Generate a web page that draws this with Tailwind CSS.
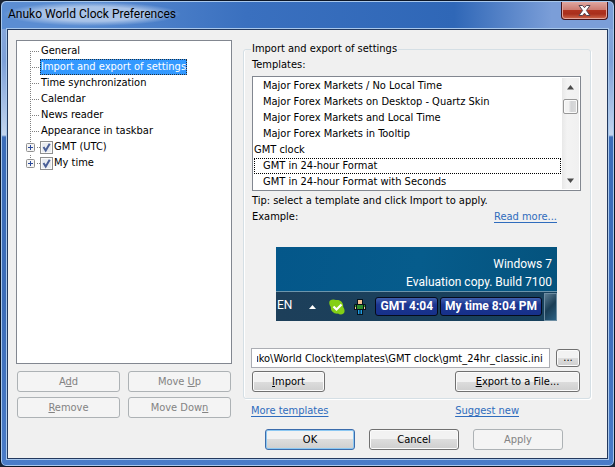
<!DOCTYPE html>
<html lang="en">
<head>
<meta charset="UTF-8">
<meta name="viewport" content="width=device-width, initial-scale=1.0">
<title>Anuko World Clock Preferences</title>
<script src="https://cdn.jsdelivr.net/npm/@tailwindcss/browser@4"></script>
</head>
<body class="bg-[#1b2433]">

<!-- shared tree parts -->
<svg class="hidden">
  <symbol id="branch" viewBox="0 0 14 16"><path d="M4.500 0v16M6 8.500h7" fill="none" stroke="#808080" stroke-dasharray="1 1"/></symbol>
  <symbol id="branch-first" viewBox="0 0 14 16"><path d="M4.500 8v8M6 8.500h7" fill="none" stroke="#808080" stroke-dasharray="1 1"/></symbol>
  <symbol id="plus" viewBox="0 0 14 16">
    <path d="M4.500 0v4M11 8.500h3" fill="none" stroke="#808080" stroke-dasharray="1 1"/>
    <rect x=".5" y="4.500" width="8" height="8" rx="1" fill="#f4f4f4" stroke="#919191"/>
    <path d="M2 8.500h5M4.500 6v5" stroke="#2b4a9b" fill="none"/>
  </symbol>
  <symbol id="tick" viewBox="0 0 13 13"><path d="M3.500 6l2.200 3.500L9.700 2.800" fill="none" stroke="#4a5f97" stroke-width="2"/></symbol>
</svg>

<!-- window frame -->
<div class="min-h-screen flex flex-col rounded-[6px] border border-[#0c1626] shadow-[inset_0_0_0_1px_#a9c8ec] px-[6px] pb-[7px] bg-[linear-gradient(to_bottom,#8cabdc_0px,#7da0d8_60px,#c3d5ee_134px,#3c6db9_136px,#3c6db9_300px,#4a7cc8_100%)] font-['DejaVu_Sans_Condensed','DejaVu_Sans',sans-serif] text-[11px] leading-4 text-black">

  <!-- title bar -->
  <header class="-mx-[5px] mt-px px-[5px] h-[27px] flex items-start justify-between rounded-t-[5px] bg-[linear-gradient(to_right,#5b8dd2_0%,#5b8dd2_12%,#3a70bf_40%,#2f67b7_74%,#7b9ed8_90%,#7b9ed8_100%)]">
    <h1 class="-ml-1 px-[5px] text-[12px] leading-6 font-['Roboto','Open_Sans',sans-serif] bg-[radial-gradient(closest-side,#a9c3e8_60%,transparent)]">Anuko World Clock Preferences</h1>
    <button aria-label="Close" class="w-[47px] h-[18px] flex items-center justify-center rounded-b-[4px] border border-t-0 border-[#43141b] shadow-[inset_0_0_0_1px_#e2a59c] bg-[linear-gradient(to_bottom,#dea6a0_0%,#cd7c72_45%,#b0331f_50%,#a82e1c_70%,#cf6a4e_100%)]">
      <svg width="13" height="11" viewBox="0 0 13 11"><path d="M1 .5h3.500L6.500 2.700 8.500.5H12L8.400 5.500 12 10.500H8.500L6.500 8.200 4.500 10.500H1L4.600 5.500z" fill="#fff" stroke="#53444f"/></svg>
    </button>
  </header>

  <main class="flex-1 flex gap-[11px] border border-[#23395e] bg-[#f0f0f0] outline outline-[#a9c8ec] pl-2 pr-4 pt-[10px] pb-[7px]">

    <!-- left column -->
    <section class="w-[216px] shrink-0">
      <ul class="h-[324px] border border-[#828790] bg-white pt-[2px] pl-[9px]">
        <li class="h-4 flex"><svg class="w-[14px] h-4"><use href="#branch-first"/></svg><span class="px-px">General</span></li>
        <li class="h-4 flex"><svg class="w-[14px] h-4"><use href="#branch"/></svg><span class="px-px bg-[#3399ff] text-white outline-1 -outline-offset-1 outline-dotted outline-[#22303f]">Import and export of settings</span></li>
        <li class="h-4 flex"><svg class="w-[14px] h-4"><use href="#branch"/></svg><span class="px-px">Time synchronization</span></li>
        <li class="h-4 flex"><svg class="w-[14px] h-4"><use href="#branch"/></svg><span class="px-px">Calendar</span></li>
        <li class="h-4 flex"><svg class="w-[14px] h-4"><use href="#branch"/></svg><span class="px-px">News reader</span></li>
        <li class="h-4 flex"><svg class="w-[14px] h-4"><use href="#branch"/></svg><span class="px-px">Appearance in taskbar</span></li>
        <li class="h-4 flex items-center">
          <svg class="w-[14px] h-4"><use href="#plus"/></svg>
          <label class="grid grid-cols-[13px_auto] items-center gap-px">
            <input type="checkbox" checked class="peer col-start-1 row-start-1 appearance-none size-[13px] border border-[#8e8f8f] bg-[#e9ecf0] shadow-[inset_0_0_0_1px_#fafafa]">
            <svg class="col-start-1 row-start-1 size-[13px] pointer-events-none invisible peer-checked:visible"><use href="#tick"/></svg>
            GMT (UTC)
          </label>
        </li>
        <li class="h-4 flex items-center">
          <svg class="w-[14px] h-4"><use href="#plus"/></svg>
          <label class="grid grid-cols-[13px_auto] items-center gap-px">
            <input type="checkbox" checked class="peer col-start-1 row-start-1 appearance-none size-[13px] border border-[#8e8f8f] bg-[#e9ecf0] shadow-[inset_0_0_0_1px_#fafafa]">
            <svg class="col-start-1 row-start-1 size-[13px] pointer-events-none invisible peer-checked:visible"><use href="#tick"/></svg>
            My time
          </label>
        </li>
      </ul>

      <div class="grid grid-cols-2 gap-x-2 gap-y-[5px] px-px mt-[7px]">
        <button disabled class="h-[21px] rounded-[3px] border border-[#adb2b5] bg-[#f4f4f4] text-[#838383]">A<u>d</u>d</button>
        <button disabled class="h-[21px] rounded-[3px] border border-[#adb2b5] bg-[#f4f4f4] text-[#838383]">Move <u>U</u>p</button>
        <button disabled class="h-[21px] rounded-[3px] border border-[#adb2b5] bg-[#f4f4f4] text-[#838383]"><u>R</u>emove</button>
        <button disabled class="h-[21px] rounded-[3px] border border-[#adb2b5] bg-[#f4f4f4] text-[#838383]">Move Dow<u>n</u></button>
      </div>
    </section>

    <!-- right column -->
    <section class="flex-1 min-w-0 pt-px">
      <fieldset class="rounded-[3px] border border-[#d5dfe5] shadow-[inset_1px_0_0_#fff,1px_1px_0_#fff] px-[7px] pb-[6px]">
        <legend class="px-px">Import and export of settings</legend>
        <p id="templates-label" class="px-px">Templates:</p>

        <div class="mr-[2px] ml-px mt-[3px] h-[115px] flex border border-[#828790] bg-white p-px">
          <ul role="listbox" aria-labelledby="templates-label" class="flex-1 pr-px">
            <li role="option" class="h-4 pl-[9px]">Major Forex Markets / No Local Time</li>
            <li role="option" class="h-4 pl-[9px]">Major Forex Markets on Desktop - Quartz Skin</li>
            <li role="option" class="h-4 pl-[9px]">Major Forex Markets and Local Time</li>
            <li role="option" class="h-4 pl-[9px]">Major Forex Markets in Tooltip</li>
            <li role="presentation" class="h-4">GMT clock</li>
            <li role="option" aria-selected="true" class="h-4 pl-[9px] outline-1 -outline-offset-1 outline-dotted outline-black">GMT in 24-hour Format</li>
            <li role="option" class="h-4 pl-[9px]">GMT in 24-hour Format with Seconds</li>
          </ul>
          <div class="w-[17px] flex flex-col items-center bg-[linear-gradient(to_right,#e8e8e8,#f3f3f3_30%,#f0f0f0)]">
            <svg class="mt-[7px] h-[5px] w-[7px]" viewBox="0 0 7 5"><path d="M3.500 0L7 4.500H0z" fill="#4a4a4a"/></svg>
            <div class="mt-[9px] w-[15px] h-[15px] rounded-[2px] border border-[#979797] shadow-[inset_0_0_0_1px_#fafafa] bg-[linear-gradient(to_right,#f2f2f2_35%,#d2d3d5_55%,#dcdcdc)]"></div>
            <svg class="mt-auto mb-[6px] h-[5px] w-[7px]" viewBox="0 0 7 5"><path d="M0 .5h7L3.500 5z" fill="#4a4a4a"/></svg>
          </div>
        </div>

        <p class="px-px mt-[2px]">Tip: select a template and click Import to apply.</p>
        <div class="flex justify-between pl-px pr-[26px]">
          <span>Example:</span>
          <a href="#" class="text-[#2f6cbd] underline underline-offset-2">Read more...</a>
        </div>

        <!-- taskbar preview -->
        <div class="ml-[25px] mr-[26px] mt-[22px] h-[74px] flex flex-col text-white font-['Roboto','Open_Sans',sans-serif] text-[12px] bg-[linear-gradient(100deg,#04578a,#065c8c_50%,#04527c)]">
          <div class="h-11 pr-[5px] text-right leading-[18px]">
            <p class="pt-2">Windows 7</p>
            <p>Evaluation copy. Build 7100</p>
          </div>
          <div class="flex-1 flex items-center border-t border-[#6d95ac] bg-[linear-gradient(to_right,#1d3f5a,#17415d)] pl-px">
            <span class="w-8 pb-1">EN</span>
            <svg class="w-[7px] h-1" viewBox="0 0 7 4"><path d="M3.500 0L7 4H0z" fill="#fff"/></svg>
            <svg class="ml-[13px] size-4" viewBox="0 0 16 16">
              <path d="M1 1.500C3 0 5.500.2 7 1c4.500-.6 7.500 2.500 7.200 7 1.500 2 2 5 .3 6.600-1.600 1.300-4 1.200-5.500 0C4.500 15 1.500 12 1.800 8 .2 6-.3 3 1 1.500z" fill="#84cf16"/>
              <path d="M4.500 7.500l3 3 5-5" fill="none" stroke="#fff" stroke-width="2.200"/>
            </svg>
            <svg class="ml-[9px] w-3 h-4" viewBox="0 0 12 16">
              <path d="M3 0h6v5h2l1 1v5H9v5H3v-5H0V6l1-1h2z" fill="#06121c"/>
              <path d="M4 1h4v4H4z" fill="#f3c18f"/>
              <path d="M3 6h6v4H3z" fill="#2d8a2b"/>
              <path d="M1 6h1v2H1zM10 6h1v2h-1z" fill="#2d8a2b"/>
              <path d="M1 8h1v2H1zM10 8h1v2h-1z" fill="#f3c18f"/>
              <path d="M4 11h1.500v4H4zM6.500 11H8v4H6.500z" fill="#1d9be0"/>
            </svg>
            <div class="ml-auto flex items-center gap-[2px] font-bold">
              <span class="h-[19px] px-1 rounded-[3px] border border-[#050b1c] bg-[linear-gradient(to_bottom,#3f5fae,#1c3691_40%,#16308a)]">GMT 4:04</span>
              <span class="h-[19px] px-1 rounded-[3px] border border-[#050b1c] bg-[linear-gradient(to_bottom,#3f5fae,#1c3691_40%,#16308a)]">My time 8:04 PM</span>
              <span class="w-[13px] h-7 border border-[#6d8da2] bg-[linear-gradient(135deg,#5b7c92,#1a3e56_50%,#2c6183)]"></span>
            </div>
          </div>
        </div>

        <div class="mt-[27px] mr-[3px] flex items-center gap-[6px]">
          <input id="path" type="text" aria-label="Template file" value="C:\Program Files\Anuko\World Clock\templates\GMT clock\gmt_24hr_classic.ini" class="flex-1 min-w-0 h-5 border border-[#abadb3] bg-white pl-[5px] pr-[6px]">
          <button aria-label="Browse" class="w-6 h-[18px] leading-3 rounded-[3px] border border-[#707070] shadow-[inset_0_0_0_1px_#fbfbfb] bg-[linear-gradient(to_bottom,#f2f2f2_50%,#dddddd_50%,#cfcfcf)]">...</button>
        </div>
        <div class="mt-[3px] mr-[3px] ml-px flex justify-between">
          <button class="w-[73px] h-[21px] rounded-[3px] border border-[#707070] shadow-[inset_0_0_0_1px_#fbfbfb] bg-[linear-gradient(to_bottom,#f2f2f2_50%,#dddddd_50%,#cfcfcf)]"><u>I</u>mport</button>
          <button class="w-[125px] h-[21px] rounded-[3px] border border-[#707070] shadow-[inset_0_0_0_1px_#fbfbfb] bg-[linear-gradient(to_bottom,#f2f2f2_50%,#dddddd_50%,#cfcfcf)]"><u>E</u>xport to a File...</button>
        </div>
      </fieldset>

      <div class="mt-1 pl-2 pr-[72px] flex justify-between">
        <a href="#" class="text-[#2f6cbd] underline underline-offset-2">More templates</a>
        <a href="#" class="text-[#2f6cbd] underline underline-offset-2">Suggest new</a>
      </div>

      <div class="mt-[10px] pr-7 flex justify-end gap-[14px]">
        <button class="w-[90px] h-[21px] rounded-[3px] border border-[#3c6cab] shadow-[inset_0_0_0_1px_#8cc8f2] bg-[linear-gradient(to_bottom,#f2f2f2_50%,#dddddd_50%,#cfcfcf)]">OK</button>
        <button class="w-[90px] h-[21px] rounded-[3px] border border-[#707070] shadow-[inset_0_0_0_1px_#fbfbfb] bg-[linear-gradient(to_bottom,#f2f2f2_50%,#dddddd_50%,#cfcfcf)]">Cancel</button>
        <button disabled class="w-[90px] h-[21px] rounded-[3px] border border-[#adb2b5] bg-[#f4f4f4] text-[#838383]">Apply</button>
      </div>
    </section>
  </main>
</div>

<script>
  // keep the end of the path in view
  const path = document.getElementById("path");
  path.scrollLeft = path.scrollWidth;
</script>
</body>
</html>
